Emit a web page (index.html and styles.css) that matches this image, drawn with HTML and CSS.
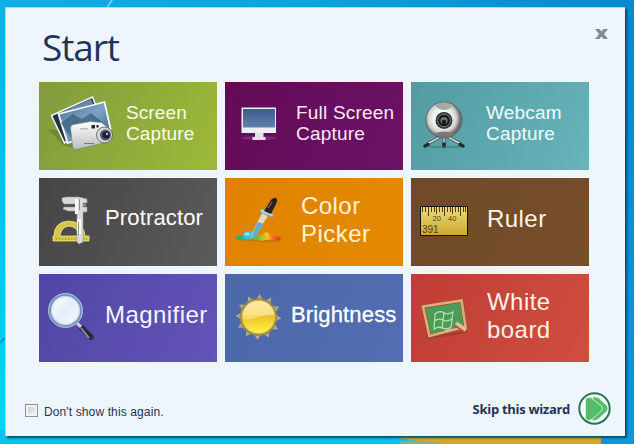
FILE: index.html
```html
<!DOCTYPE html>
<html lang="en">
<head>
<meta charset="utf-8">
<title>Start</title>
<link rel="stylesheet" href="styles.css">
</head>
<body>
<svg class="desktop" viewBox="0 0 634 444" aria-hidden="true">
  <defs>
    <linearGradient id="sky"><stop offset="0" stop-color="#10b0e6"/><stop offset=".5" stop-color="#0aa3dc"/><stop offset="1" stop-color="#0888ce"/></linearGradient>
    <linearGradient id="left" x2="0" y2="1"><stop offset="0" stop-color="#0cb0e6"/><stop offset="1" stop-color="#03d6f6"/></linearGradient>
    <linearGradient id="right" x2="0" y2="1"><stop offset="0" stop-color="#0888cf"/><stop offset="1" stop-color="#0a98dc"/></linearGradient>
  </defs>
  <path fill="url(#sky)" d="M0 0h634v12H0z"/>
  <path fill="url(#left)" d="M0 0h12v444H0z"/>
  <path fill="#05c3f0" d="M0 430h620v14H0z"/>
  <path fill="#d9a520" d="M376 434h226v10H438q-30-4-62-10z"/>
  <path fill="#7fb28a" d="M400 441q20-1 45 3h-45z"/>
  <path fill="url(#right)" d="M618 0h16v444h-33v-10h17z"/>
  <path stroke="#5fd4f2" stroke-width="2" d="M112 0l-5 8"/>
  <path stroke="#0a9bd6" stroke-width="2" d="M0 343l6-6"/>
</svg>
<main class="window">
  <header class="head">
    <h1>Start</h1>
    <svg class="close" viewBox="0 0 13 10"><path fill="#858a8e" d="M0 0h4.500L6.500 2.600 8.500 0H13L9 5l4 5H8.500L6.500 7.400 4.500 10H0L4 5z"/></svg>
  </header>
  <section class="grid">
    <a class="tile green">
      <svg width="87" height="88" viewBox="39 82 87 88">
        <defs>
          <linearGradient id="photo" x2="1" y2="1"><stop offset="0" stop-color="#4e7598"/><stop offset=".5" stop-color="#7ba3c3"/><stop offset="1" stop-color="#315679"/></linearGradient>
          <linearGradient id="cam" x2="0" y2="1"><stop offset="0" stop-color="#fff"/><stop offset="1" stop-color="#b9bdbe"/></linearGradient>
        </defs>
        <path fill="#647b2b" opacity=".65" d="M48 129l15 16 15 5-7-17z"/>
        <path fill="#203444" stroke="#f2f5f5" stroke-width="1.500" d="M51.500 115.500l41-18.500 5 13-33 33z"/>
        <path fill="#638baa" d="M57 114l34-15 2 5-33 10z"/>
        <path fill="url(#photo)" stroke="#fafcfc" stroke-width="1.800" d="M58.500 114l46-12 6 27-43 14z"/>
        <path fill="#365b7e" d="M61 123l12-9 9 5 9-6 16 13-37 11z" opacity=".7"/>
        <path fill="url(#cam)" stroke="#767a7a" stroke-width=".6" d="M70.500 128q0-3 3-3.500l17-3 11 1 5 4q5 3 5 8 0 5-6 8l-29 7q-3 1-4-3z"/>
        <path fill="#222" d="M91.500 125h3.500v3.500h-3.500zM96.500 125h2v2.500h-2z"/>
        <path fill="#bbb" d="M80 128h8v1.500h-8z"/><path fill="#777" d="M84 143h10v1H84z"/>
        <circle cx="104.500" cy="135" r="8" fill="#d5d7d8" stroke="#595b5d" stroke-width=".8"/>
        <circle cx="105.500" cy="135" r="5.500" fill="#555a63"/><circle cx="106" cy="135" r="3.600" fill="#161d31"/><circle cx="107" cy="134" r="1.200" fill="#aac5ef"/>
      </svg>
      <span class="label small">Screen<br>Capture</span>
    </a>
    <a class="tile purple">
      <svg width="71" height="88" viewBox="225 82 71 88">
        <defs><linearGradient id="screen" x2="0" y2="1"><stop offset="0" stop-color="#3b5c91"/><stop offset="1" stop-color="#657fae"/></linearGradient></defs>
        <ellipse cx="259" cy="138" rx="18" ry="2" fill="#8c4684" opacity=".5"/>
        <path fill="#efedf2" d="M241.500 107.500h34.500v25.500h-34.500z"/>
        <path fill="url(#screen)" d="M243 109h32v18.500h-32z"/>
        <path fill="#e7e0e8" d="M255 133h8.500v4h2v3h-13v-3h2.500z"/>
      </svg>
      <span class="label small wide">Full Screen<br>Capture</span>
    </a>
    <a class="tile teal">
      <svg width="75" height="88" viewBox="411 82 75 88">
        <defs><radialGradient id="ball" cx=".45" cy=".45"><stop offset=".4" stop-color="#fff"/><stop offset=".8" stop-color="#cfcfcd"/><stop offset="1" stop-color="#6d6d6c"/></radialGradient></defs>
        <path stroke="#303838" stroke-width="2.800" d="M440 137l-13 7M448 137l13 7M444 138v7"/>
        <path stroke="#dadddd" stroke-width="1.500" d="M440 137l-13 7M448 137l13 7M444 138v5"/>
        <path stroke="#252a2b" stroke-width="3.500" stroke-linecap="round" d="M425 146l3-1.500M463 146l-3-1.500M444 144v2.500"/>
        <path stroke="#3d7378" d="M429 147h31"/>
        <circle cx="444" cy="120" r="18" fill="url(#ball)" stroke="#5b5d5d" stroke-width=".8"/>
        <path fill="#a7a9a3" d="M435 105q9-5 18 0-3 5-9 5t-9-5z"/><path fill="#767a76" d="M433 134q11-5 22 0-10 7-22 0z"/>
        <circle cx="444" cy="120.500" r="8.500" fill="#353738"/><circle cx="444" cy="120.500" r="6.300" fill="#181b1c" stroke="#777b7b"/>
        <circle cx="444" cy="120.500" r="3.600" fill="#6e7475"/><circle cx="444" cy="122" r="2.200" fill="#171a1b"/>
      </svg>
      <span class="label small wide">Webcam<br>Capture</span>
    </a>
    <a class="tile gray">
      <svg width="66" height="88" viewBox="39 178 66 88">
        <path fill="#d7c746" stroke="#f1e985" stroke-width=".8" fill-rule="evenodd" d="M54 236q0-14 15-15 15 1 16 15h4v5H53v-5zM60 236h19q-1-9-10-10-8 1-9 10z"/>
        <path stroke="#948527" stroke-dasharray="1 2" d="M56 239h31"/>
        <path fill="#d7dbd9" stroke="#939895" stroke-width=".6" d="M62 198l4-1h13l8 2v4h-4v4h4v5h-4v30l-4 2-2-2v-31h-9l-5-2 1-2h12v-3H64l-2-3z"/>
        <path fill="#fff" d="M75 199h3v15h-3zM77 219h4v15h-4z"/>
        <path fill="#8d9290" d="M79 199h1v11h-1zM78 222h1v13h-1zM83 204h3v2h-3z"/><path stroke="#d8dada" stroke-width="2" d="M79 237v6"/>
      </svg>
      <span class="label medium">Protractor</span>
    </a>
    <a class="tile orange">
      <svg width="76" height="88" viewBox="225 178 76 88">
        <defs><linearGradient id="paint"><stop stop-color="#30aa4b"/><stop offset=".25" stop-color="#26b8b3"/><stop offset=".48" stop-color="#70b941"/><stop offset=".7" stop-color="#f2c71b"/><stop offset=".85" stop-color="#f15e28"/><stop offset="1" stop-color="#dc371b"/></linearGradient></defs>
        <path fill="#a66c0a" opacity=".5" d="M236 239q12 3 20 2 10 3 24 0l-8-4z"/>
        <path fill="url(#paint)" d="M235 238q1-3 8-3 2-5 7-4 4 1 5 4l8 0q1-4 6-2 1 3 4 3 8 0 8 3-2 3-9 1-6-1-10 1-6-2-13-1-11 1-14-2z"/>
        <ellipse cx="248" cy="235" rx="5" ry="4" fill="#43c0dd"/><ellipse cx="247" cy="234" rx="2.500" ry="1.500" fill="#a3e9ec"/>
        <path fill="#eadcb3" stroke="#9ab1bb" stroke-width=".6" d="M262 213l6 3-13 20-4 2 1-5z"/><path fill="#65aeca" d="M258 222l6 2-8 12-4 1 1-5z"/>
        <path fill="#b9d2e3" stroke="#7198b2" stroke-width=".5" d="M260 209q9 0 14 7-2 2-6-1-8-1-8-6z"/>
        <path fill="#262423" d="M264 211l7-11q4-4 6-1 1 2-1 5l-5 10z"/><path stroke="#858585" d="M268 208l4-6"/>
      </svg>
      <span class="label large">Color<br>Picker</span>
    </a>
    <a class="tile brown">
      <svg width="76" height="88" viewBox="411 178 76 88">
        <defs><linearGradient id="brass" x2="0" y2="1"><stop stop-color="#eddc79"/><stop offset="1" stop-color="#cda72f"/></linearGradient></defs>
        <path fill="url(#brass)" stroke="#17110a" d="M420.500 206.500h47v29h-47z"/>
        <path stroke="#4b3d15" d="M422.500 207v5M425.500 207v5M428.500 207v9M431.500 207v5M434.500 207v5M436.500 207v7M439.500 207v5M442.500 207v5M444.500 207v9M447.500 207v5M450.500 207v5M452.500 207v7M455.500 207v5M458.500 207v5M460.500 207v9M463.500 207v5M465.500 207v5"/>
        <text x="432.500" y="221" class="tick">20</text><text x="448" y="221" class="tick">40</text><text x="422" y="233" class="reading">391</text>
      </svg>
      <span class="label large">Ruler</span>
    </a>
    <a class="tile indigo">
      <svg width="66" height="88" viewBox="39 274 66 88">
        <defs><linearGradient id="lens" x2="1" y2="1"><stop stop-color="#fff"/><stop offset=".5" stop-color="#e5edfb"/><stop offset="1" stop-color="#f9faff"/></linearGradient></defs>
        <path stroke="#292b3c" stroke-width="5.500" stroke-linecap="round" d="M82 328l9 9"/><path stroke="#8e8ba0" stroke-width="2" d="M81 328l8 10"/>
        <path stroke="#d5d6df" stroke-width="3" d="M77 323l4 4"/>
        <circle cx="65.500" cy="310.500" r="16" fill="url(#lens)" stroke="#7894bd" stroke-width="3"/>
        <circle cx="65.500" cy="310.500" r="16.900" fill="none" stroke="#b8cbe2" stroke-width=".8"/><circle cx="65.500" cy="310.500" r="14" fill="none" stroke="#b8c7df" stroke-width=".8"/>
      </svg>
      <span class="label large">Magnifier</span>
    </a>
    <a class="tile blue">
      <svg width="66" height="88" viewBox="225 274 66 88">
        <defs>
          <linearGradient id="sun" x2="0" y2="1"><stop stop-color="#fae99c"/><stop offset=".43" stop-color="#f4d35d"/><stop offset=".48" stop-color="#efc326"/><stop offset="1" stop-color="#fff34b"/></linearGradient>
          <path id="ray" d="M-3.500-17L0-23 3.500-17z"/>
          <g id="rays"><use href="#ray"/><use href="#ray" transform="rotate(30)"/><use href="#ray" transform="rotate(60)"/></g>
        </defs>
        <g transform="translate(258.500 317) rotate(3)" fill="#b2ad84">
          <use href="#rays"/><use href="#rays" transform="rotate(90)"/><use href="#rays" transform="rotate(180)"/><use href="#rays" transform="rotate(270)"/>
        </g>
        <circle cx="258.500" cy="317" r="19" fill="#8d8660" opacity=".85"/>
        <circle cx="258.500" cy="317" r="16.700" fill="url(#sun)" stroke="#d6aa35"/>
        <path fill="#fff3b8" opacity=".45" d="M243 315q2-14 16-14 13 1 15 13-8 1-16 3-8 3-15 2z"/>
      </svg>
      <span class="label medium strong">Brightness</span>
    </a>
    <a class="tile red">
      <svg width="76" height="88" viewBox="411 274 76 88">
        <path fill="#8f312a" opacity=".5" d="M426 336l41-5 1 2-40 6z"/>
        <path fill="#4c9b59" stroke="#8d5b36" stroke-width="3.800" d="M423 306.500l38.500-6 4 26-36 9.500z"/>
        <path fill="none" stroke="#e7a979" stroke-width="2.500" d="M423 306.500l38.500-6 4 26-36 9.500z"/>
        <path fill="none" stroke="#b5e6ae" stroke-width="1.200" d="M435 314q5-4 9-1 4 2 9-1l-2 15q-4 3-8 1-4-2-9 1zM434 321q5-3 9-1 4 2 9-1M444 312l-2 17M445 331l7-2"/>
        <path stroke="#9e5337" stroke-width="5" d="M456 324l10 7"/><path stroke="#f0b991" stroke-width="3.500" d="M456 323l10 7"/>
      </svg>
      <span class="label large">White<br>board</span>
    </a>
  </section>
  <footer class="foot">
    <label class="again"><span class="box"></span>Don't show this again.</label>
    <a class="skip">Skip this wizard
      <svg width="33" height="33" viewBox="0 0 33 33"><circle cx="16.500" cy="16.500" r="15.200" fill="#f2faf7" stroke="#287653" stroke-width="2"/><path fill="#55bd68" d="M15 5.500q5-1 8 3l5.500 5q2 3 0 6l-6 5q-3 4-8 4z"/><path fill="#55bd68" stroke="#d8f1dd" stroke-width=".9" d="M7.500 7q2-3 6-1l10 8q2 2 0 5l-9 8q-4 3-7 0z"/></svg>
    </a>
  </footer>
</main>
</body>
</html>
```
FILE: styles.css
```css
* { box-sizing: border-box; }
body {
  margin: 0;
  width: 634px;
  height: 444px;
  padding: 7px 0 0 5px;
  overflow: hidden;
  font-family: "Liberation Sans", Arial, sans-serif;
}
.desktop { position: absolute; inset: 0; width: 634px; height: 444px; z-index: -1; }
.window {
  width: 620px;
  height: 429px;
  padding: 0 14px 0 34px;
  display: flex;
  flex-direction: column;
  background: #eff5fd;
  border: 1px solid #9fdcf3;
  border-width: 1px 0 0 1px;
  box-shadow: 2px 2px 2px #07496c;
}
.head { height: 74px; flex: none; display: flex; justify-content: space-between; }
h1 {
  margin: 12px 0 0 2px;
  color: #1c355e;
  font: 400 37px/54px "Open Sans", "Noto Sans", sans-serif;
  letter-spacing: -1.1px;
}
.close { width: 13px; height: 10px; margin: 21px 3px 0 0; }
.grid {
  margin-left: -1px;
  display: grid;
  grid-template-columns: repeat(3, 178px);
  grid-auto-rows: 88px;
  gap: 8px;
}
.tile { display: flex; align-items: center; overflow: hidden; color: #fff; }
.tile svg { flex: none; fill: none; }
.label { white-space: nowrap; }
.small { font-size: 19px; line-height: 21px; padding-bottom: 6px; letter-spacing: .1px; }
.wide { letter-spacing: .2px; }
.medium { font-size: 22px; line-height: 28px; padding-bottom: 8px; letter-spacing: .15px; }
.large { font-size: 24px; line-height: 28px; padding-bottom: 5px; letter-spacing: .45px; }
.strong { -webkit-text-stroke: .3px #fff; padding-bottom: 6px; }
.green { background: linear-gradient(115deg, #829b3d, #9cba39); color: #fafde9; }
.purple { background: linear-gradient(115deg, #620b55, #6c1267); color: #fae8fa; }
.teal { background: linear-gradient(115deg, #529ba2, #67b4ba); color: #effdff; }
.gray { background: linear-gradient(115deg, #454545, #5b5b5b); }
.orange { background: linear-gradient(115deg, #df8200, #e58a00); color: #fff5cf; }
.brown { background: linear-gradient(115deg, #704a27, #764e2b); color: #fff4e7; }
.indigo { background: linear-gradient(115deg, #5046a5, #6354b7); color: #f7f3ff; }
.blue { background: linear-gradient(115deg, #4c68a9, #526db1); }
.red { background: linear-gradient(115deg, #bf3d34, #cf4e40); color: #fff0e4; }
.brown .label, .indigo .label { padding-bottom: 6px; }
.tick { fill: #514416; font-size: 7.5px; }
.reading { fill: #514416; font-size: 10px; }
.foot {
  height: 33px;
  margin: 30px 0 0 -15px;
  display: flex;
  align-items: center;
  justify-content: space-between;
  color: #1e3458;
}
.again { display: flex; align-items: center; font-size: 12px; letter-spacing: .12px; padding-top: 6px; }
.box {
  width: 13px;
  height: 13px;
  margin: -3px 6px 0 0;
  border: 1px solid #8b9299;
  background: linear-gradient(135deg, #c5cbd1, #f4f5f6);
  box-shadow: inset 0 0 0 2px #f0f2f4;
}
.skip {
  display: flex;
  align-items: center;
  gap: 8px;
  font: 700 13px "Open Sans", sans-serif;
  letter-spacing: -.3px;
}
```
